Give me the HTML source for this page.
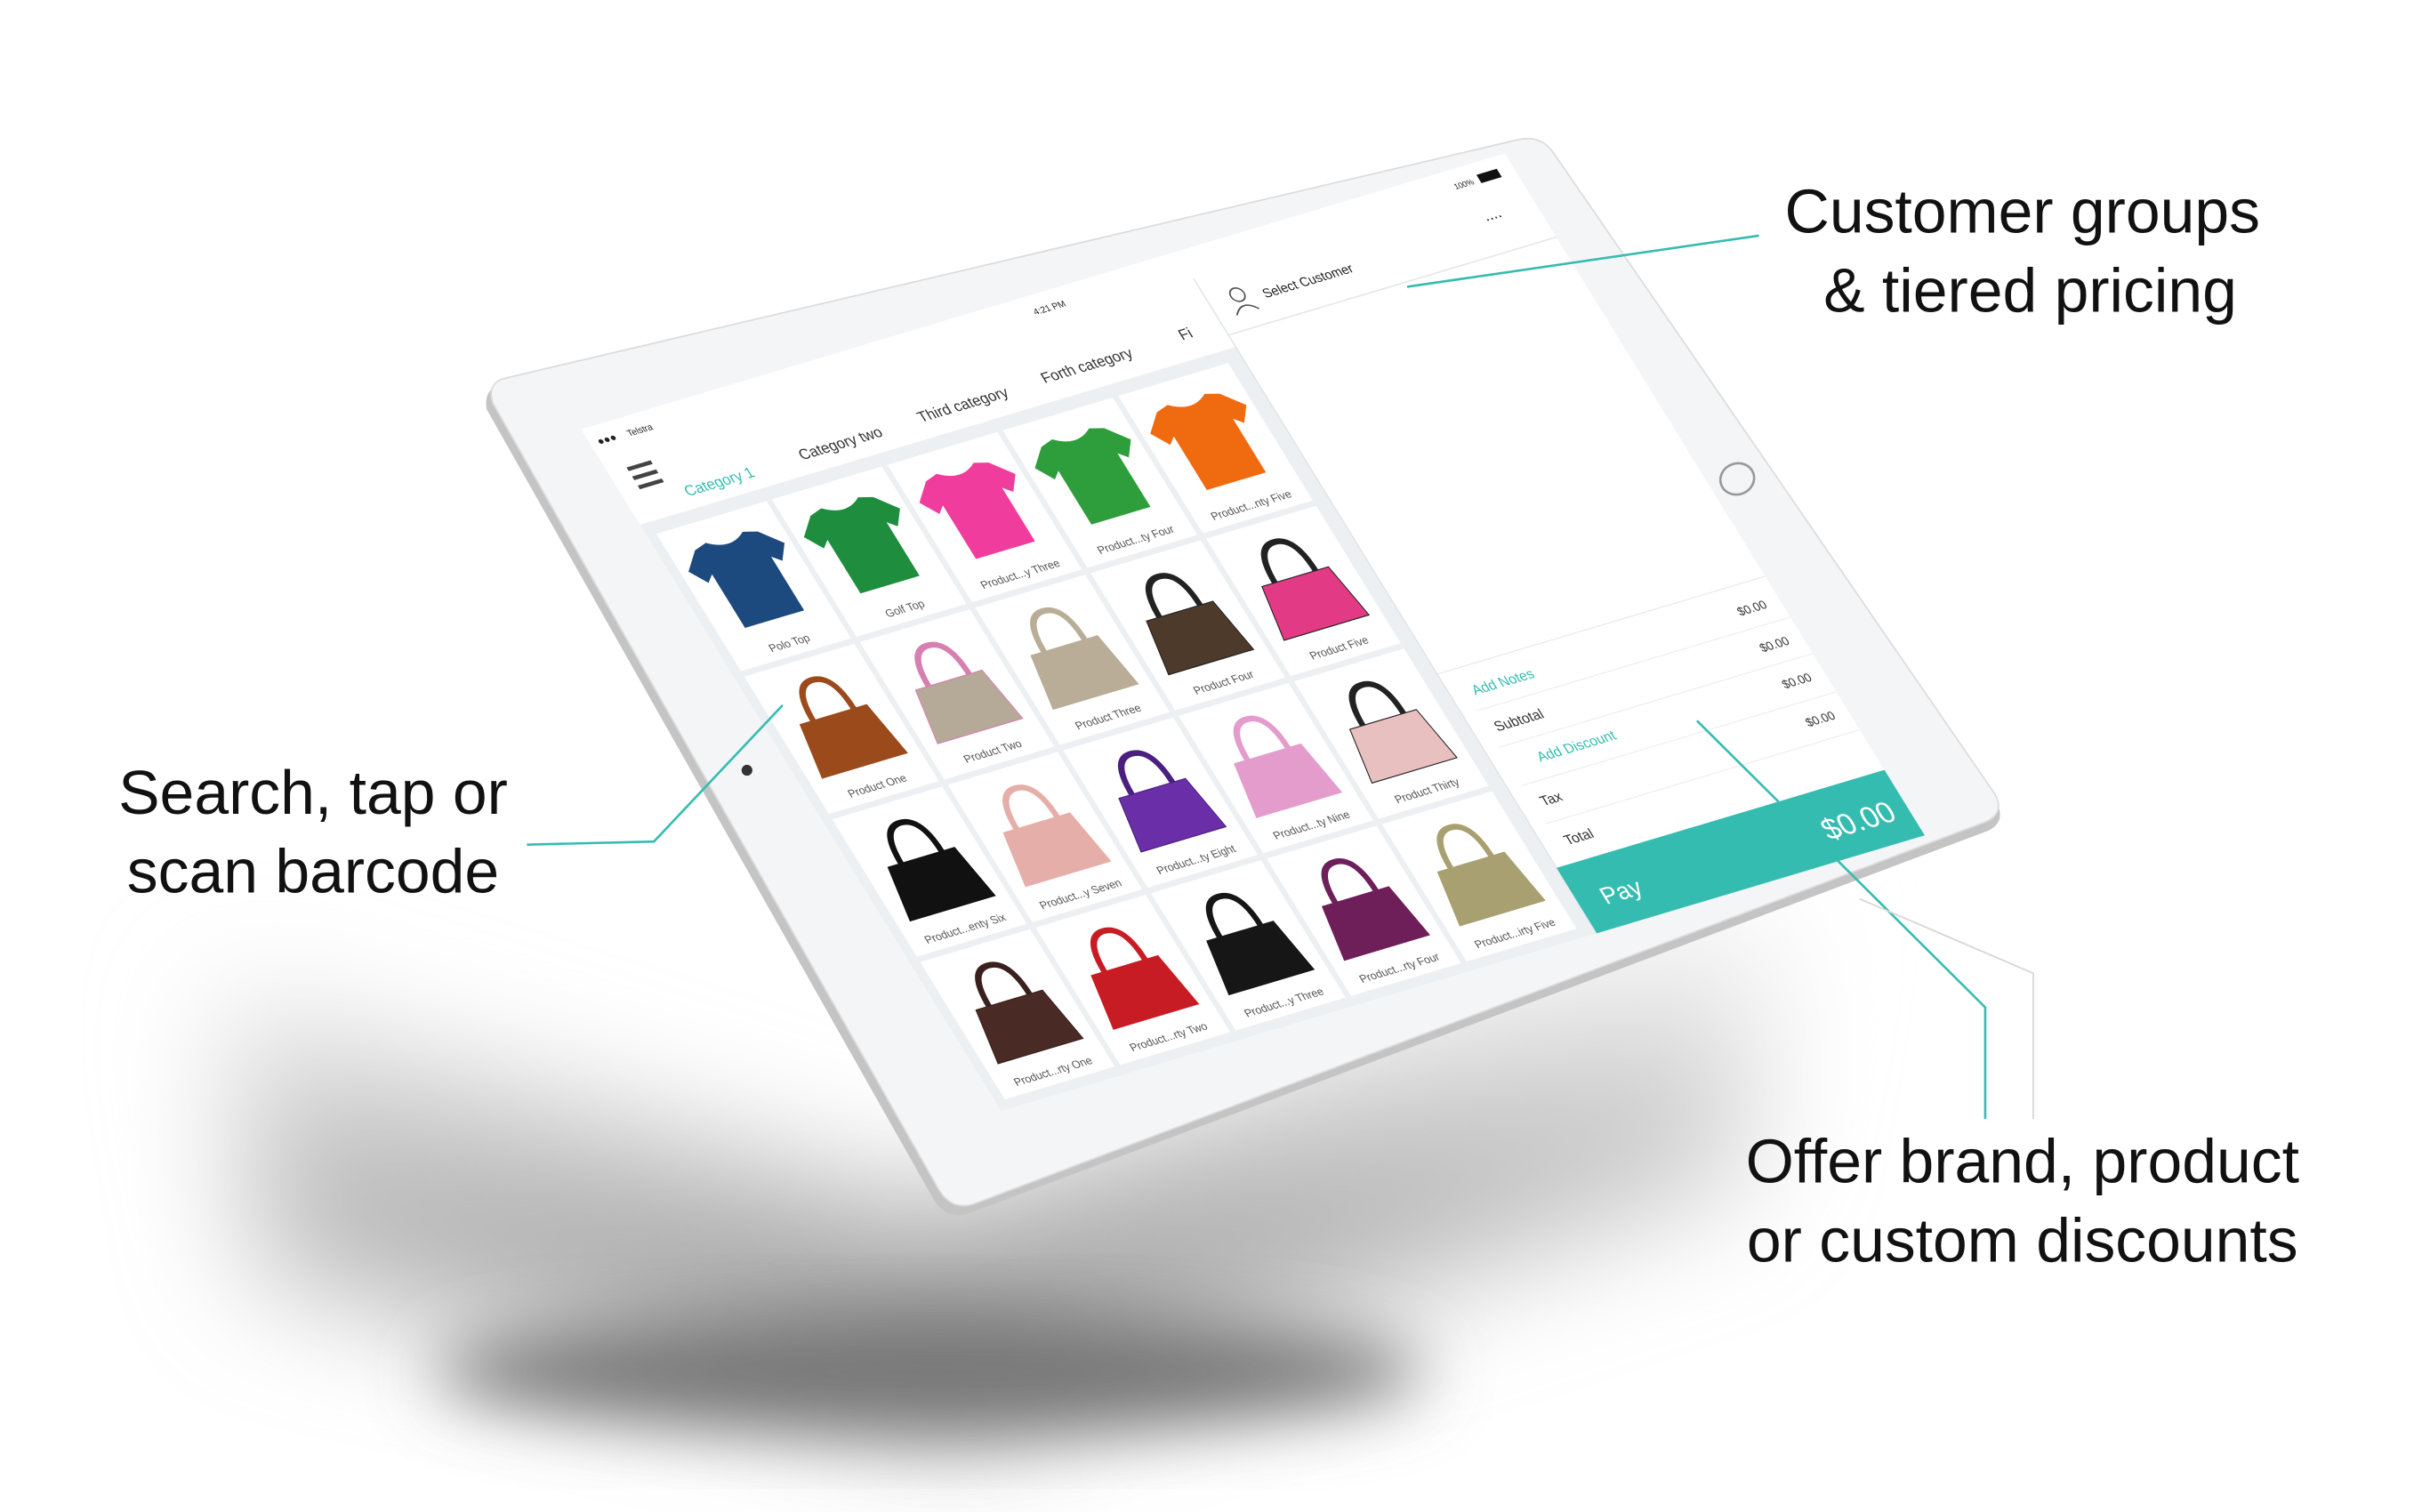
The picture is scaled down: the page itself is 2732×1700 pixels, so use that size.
<!DOCTYPE html>
<html><head><meta charset="utf-8"><style>
html,body{margin:0;padding:0;background:#fff;}
svg{display:block;}
text{font-family:"Liberation Sans",sans-serif;}
</style></head><body>
<svg width="2732" height="1700" viewBox="0 0 1568 975.6" xmlns="http://www.w3.org/2000/svg">
<defs>
<filter id="blur1" x="-50%" y="-50%" width="200%" height="200%"><feGaussianBlur stdDeviation="40"/></filter>
<filter id="blur2" x="-50%" y="-50%" width="200%" height="200%"><feGaussianBlur stdDeviation="22"/></filter>
<linearGradient id="sg" x1="0" y1="0" x2="0" y2="1"><stop offset="0" stop-color="#fff"/><stop offset="1" stop-color="#8a8a8a"/></linearGradient>
<g id="shirt"><path d="M40 22 L26 26 L8 44 L20 60 L28 53 L28 112 L92 112 L92 53 L100 60 L112 44 L94 26 L80 22 Q60 36 40 22Z"/></g>
<g id="bag"><path d="M38 62 Q38 22 60 22 Q82 22 82 62" fill="none" stroke-width="6"/><path d="M24 60 L96 60 L106 116 L14 116 Z"/></g>
</defs>
<rect width="1568" height="976" fill="#fff"/>
<!-- shadow -->
<polygon points="140,640 600,780 1150,570 1120,760 620,920 170,820" fill="url(#sg)" filter="url(#blur1)"/>
<ellipse cx="600" cy="885" rx="320" ry="38" fill="#777" filter="url(#blur2)"/>
<!-- ipad body -->
<path d="M323,248 Q312,251 314,264 L603,775 Q611,787 625,783 L1283,536 Q1295,530 1288,517 L1001,99 Q993,88 979,91 Z" fill="#c4c4c4"/>
<path d="M326,244 Q314,247 318,260 L606,768 Q614,781 628,777 L1282,530 Q1294,524 1287,512 L1002,98 Q994,87 980,90 Z" fill="#f4f5f6" stroke="#dcdcdc" stroke-width="1"/>
<ellipse cx="1121" cy="309" rx="11" ry="10" fill="none" stroke="#999" stroke-width="1.5" transform="rotate(-20 1121 309)"/>
<circle cx="482" cy="497" r="3.5" fill="#333"/>
<!-- screen -->
<g transform="matrix(0.596 -0.178 0.3613 0.5867 375 277)">
<rect x="0" y="0" width="1000" height="750" fill="#fff"/>
<rect x="0" y="105" width="645" height="645" fill="#edf0f2"/>
<line x1="645" y1="30" x2="645" y2="750" stroke="#e2e5e7" stroke-width="1.5"/>
<text x="8" y="20" font-size="11" fill="#222">●●●</text>
<text x="40" y="20" font-size="9" fill="#222">Telstra</text>
<text x="480" y="20" font-size="9" fill="#222">4:21 PM</text>
<text x="935" y="20" font-size="8" fill="#222">100%</text>
<rect x="962" y="12" width="22" height="9" fill="#111"/>
<rect x="20" y="48" width="26" height="4" fill="#444"/><rect x="20" y="58" width="26" height="4" fill="#444"/><rect x="20" y="68" width="26" height="4" fill="#444"/>
<text x="60" y="92" font-size="15" fill="#35bcb0">Category 1</text>
<text x="185" y="90" font-size="15" fill="#333">Category two</text>
<text x="315" y="88" font-size="15" fill="#333">Third category</text>
<text x="450" y="86" font-size="15" fill="#333">Forth category</text>
<text x="600" y="84" font-size="15" fill="#333">Fi</text>
<!-- right panel -->
<circle cx="676" cy="57" r="7" fill="none" stroke="#555" stroke-width="1.5"/>
<path d="M664 76 Q676 62 688 76" fill="none" stroke="#555" stroke-width="1.5"/>
<text x="700" y="68" font-size="13" fill="#222">Select Customer</text>
<text x="945" y="58" font-size="16" fill="#222">....</text>
<line x1="645" y1="92" x2="1000" y2="92" stroke="#e6e8ea" stroke-width="1.5"/>
<line x1="645" y1="465" x2="1000" y2="465" stroke="#e6e8ea" stroke-width="1"/>
<text x="668" y="495" font-size="14" fill="#35bcb0">Add Notes</text>
<text x="668" y="535" font-size="14" fill="#333">Subtotal</text>
<text x="690" y="575" font-size="14" fill="#35bcb0">Add Discount</text>
<text x="668" y="617" font-size="14" fill="#333">Tax</text>
<text x="668" y="660" font-size="14" fill="#333">Total</text>
<text x="985" y="495" font-size="12" fill="#333" text-anchor="end">$0.00</text>
<text x="985" y="535" font-size="12" fill="#333" text-anchor="end">$0.00</text>
<text x="985" y="575" font-size="12" fill="#333" text-anchor="end">$0.00</text>
<text x="985" y="617" font-size="12" fill="#333" text-anchor="end">$0.00</text>
<line x1="660" y1="510" x2="1000" y2="510" stroke="#eceeef"/><line x1="660" y1="550" x2="1000" y2="550" stroke="#eceeef"/><line x1="660" y1="592" x2="1000" y2="592" stroke="#eceeef"/><line x1="660" y1="634" x2="1000" y2="634" stroke="#eceeef"/>
<rect x="645" y="678" width="355" height="72" fill="#35bcb0"/>
<text x="670" y="726" font-size="24" fill="#fff">Pay</text>
<text x="985" y="728" font-size="30" fill="#fff" text-anchor="end">$0.00</text>
<!-- grid -->
<g transform="translate(10,118)"><rect width="119" height="151" fill="#fff"/><use href="#shirt" fill="#1d4a7e"/><text x="60" y="142" font-size="11" fill="#555" text-anchor="middle">Polo Top</text></g>
<g transform="translate(135,118)"><rect width="119" height="151" fill="#fff"/><use href="#shirt" fill="#1e8e3e"/><text x="60" y="142" font-size="11" fill="#555" text-anchor="middle">Golf Top</text></g>
<g transform="translate(260,118)"><rect width="119" height="151" fill="#fff"/><use href="#shirt" fill="#f03c9c"/><text x="60" y="142" font-size="11" fill="#555" text-anchor="middle">Product...y Three</text></g>
<g transform="translate(385,118)"><rect width="119" height="151" fill="#fff"/><use href="#shirt" fill="#2e9e3c"/><text x="60" y="142" font-size="11" fill="#555" text-anchor="middle">Product...ty Four</text></g>
<g transform="translate(510,118)"><rect width="119" height="151" fill="#fff"/><use href="#shirt" fill="#f06a10"/><text x="60" y="142" font-size="11" fill="#555" text-anchor="middle">Product...nty Five</text></g>

<g transform="translate(10,275)"><rect width="119" height="151" fill="#fff"/><use href="#bag" fill="#9b4a1c" stroke="#9b4a1c"/><text x="60" y="142" font-size="11" fill="#555" text-anchor="middle">Product One</text></g>
<g transform="translate(135,275)"><rect width="119" height="151" fill="#fff"/><use href="#bag" fill="#b5aa98" stroke="#d77fb0"/><text x="60" y="142" font-size="11" fill="#555" text-anchor="middle">Product Two</text></g>
<g transform="translate(260,275)"><rect width="119" height="151" fill="#fff"/><use href="#bag" fill="#b9ad98" stroke="#b9ad98"/><text x="60" y="142" font-size="11" fill="#555" text-anchor="middle">Product Three</text></g>
<g transform="translate(385,275)"><rect width="119" height="151" fill="#fff"/><use href="#bag" fill="#4d3a2a" stroke="#222"/><text x="60" y="142" font-size="11" fill="#555" text-anchor="middle">Product Four</text></g>
<g transform="translate(510,275)"><rect width="119" height="151" fill="#fff"/><use href="#bag" fill="#e33a85" stroke="#222"/><text x="60" y="142" font-size="11" fill="#555" text-anchor="middle">Product Five</text></g>

<g transform="translate(10,432)"><rect width="119" height="151" fill="#fff"/><use href="#bag" fill="#111" stroke="#111"/><text x="60" y="142" font-size="11" fill="#555" text-anchor="middle">Product...enty Six</text></g>
<g transform="translate(135,432)"><rect width="119" height="151" fill="#fff"/><use href="#bag" fill="#e6aea8" stroke="#e6aea8"/><text x="60" y="142" font-size="11" fill="#555" text-anchor="middle">Product...y Seven</text></g>
<g transform="translate(260,432)"><rect width="119" height="151" fill="#fff"/><use href="#bag" fill="#6a2fa8" stroke="#4a1f80"/><text x="60" y="142" font-size="11" fill="#555" text-anchor="middle">Product...ty Eight</text></g>
<g transform="translate(385,432)"><rect width="119" height="151" fill="#fff"/><use href="#bag" fill="#e39ccc" stroke="#e39ccc"/><text x="60" y="142" font-size="11" fill="#555" text-anchor="middle">Product...ty Nine</text></g>
<g transform="translate(510,432)"><rect width="119" height="151" fill="#fff"/><use href="#bag" fill="#e8c0c0" stroke="#222"/><text x="60" y="142" font-size="11" fill="#555" text-anchor="middle">Product Thirty</text></g>

<g transform="translate(10,589)"><rect width="119" height="151" fill="#fff"/><use href="#bag" fill="#4a2a24" stroke="#3a201c"/><text x="60" y="142" font-size="11" fill="#555" text-anchor="middle">Product...rty One</text></g>
<g transform="translate(135,589)"><rect width="119" height="151" fill="#fff"/><use href="#bag" fill="#c81c24" stroke="#c81c24"/><text x="60" y="142" font-size="11" fill="#555" text-anchor="middle">Product...rty Two</text></g>
<g transform="translate(260,589)"><rect width="119" height="151" fill="#fff"/><use href="#bag" fill="#161616" stroke="#161616"/><text x="60" y="142" font-size="11" fill="#555" text-anchor="middle">Product...y Three</text></g>
<g transform="translate(385,589)"><rect width="119" height="151" fill="#fff"/><use href="#bag" fill="#6e1f5a" stroke="#6e1f5a"/><text x="60" y="142" font-size="11" fill="#555" text-anchor="middle">Product...rty Four</text></g>
<g transform="translate(510,589)"><rect width="119" height="151" fill="#fff"/><use href="#bag" fill="#a8a070" stroke="#a8a070"/><text x="60" y="142" font-size="11" fill="#555" text-anchor="middle">Product...irty Five</text></g>
</g>
<!-- callout lines -->
<polyline points="908,185 1135,152" fill="none" stroke="#35bcb0" stroke-width="1.5"/>
<polyline points="340,545 422,543 505,455" fill="none" stroke="#35bcb0" stroke-width="1.5"/>
<polyline points="1095,465 1281,650 1281,722" fill="none" stroke="#35bcb0" stroke-width="1.5"/>
<polyline points="1200,580 1312,628 1312,722" fill="none" stroke="#d6d6d6" stroke-width="1"/>
<!-- callout text -->
<g font-size="40" fill="#111" text-anchor="middle">
<text x="1305" y="150">Customer groups</text>
<text x="1310" y="201">&amp; tiered pricing</text>
<text x="202" y="525">Search, tap or</text>
<text x="202" y="576">scan barcode</text>
<text x="1305" y="763">Offer brand, product</text>
<text x="1305" y="814">or custom discounts</text>
</g>
</svg>
</body></html>
